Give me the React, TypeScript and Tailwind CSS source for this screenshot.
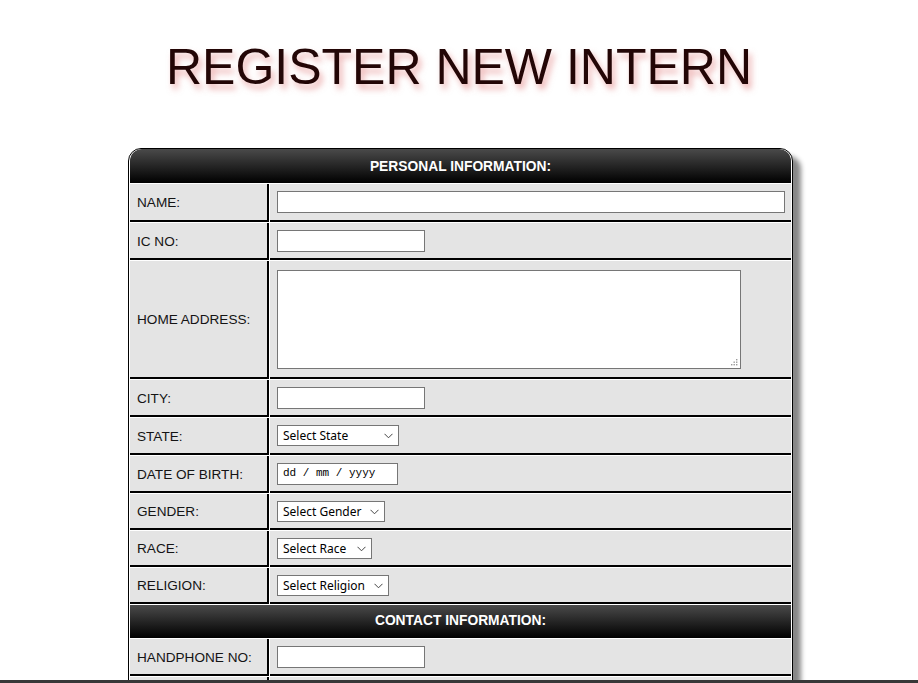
import React from "react";

const cellBase = "bg-[#e4e4e4] border-b-2 border-black flex items-center";

function Row({
  label,
  h,
  children,
}: {
  label: string;
  h: string;
  children: React.ReactNode;
}) {
  return (
    <div className={`flex gap-[1px] ${h}`}>
      <div
        className={`${cellBase} w-[139px] shrink-0 border-r-2 pl-[7px] pt-[3px] text-[13.6px] text-[#141414]`}
      >
        {label}
      </div>
      <div className={`${cellBase} flex-1 pl-[7px]`}>{children}</div>
    </div>
  );
}

function Header({ title, h }: { title: string; h: string }) {
  return (
    <div
      className={`${h} flex items-center justify-center bg-[linear-gradient(#4a4a4a,#000)] text-white font-bold text-[13.8px]`}
    >
      {title}
    </div>
  );
}

function Chevron() {
  return (
    <svg
      width="9"
      height="6"
      viewBox="0 0 9 6"
      className="absolute right-[6px] top-[8px] pointer-events-none"
    >
      <path d="M0.5 0.8 L4.5 4.8 L8.5 0.8" fill="none" stroke="#444" strokeWidth="1" />
    </svg>
  );
}

function Select({ text, w }: { text: string; w: string }) {
  return (
    <div className={`relative ${w} h-[21px]`}>
      <select className="block appearance-none w-full h-full bg-white border border-[#767676] text-[12px] text-black pl-[5px] leading-[19px] [font-family:'Noto_Sans',sans-serif]">
        <option>{text}</option>
      </select>
      <Chevron />
    </div>
  );
}

const inputCls = "block bg-white border border-[#767676] h-[22px] outline-none";

export default function App() {
  return (
    <div className="min-h-screen bg-white [font-family:'Liberation_Sans',Arial,sans-serif]">
      <h1 className="pt-[42px] text-center text-[50px] leading-[50px] text-[#230606] [text-shadow:3px_5px_6px_rgba(220,110,110,0.55)]">
        REGISTER NEW INTERN
      </h1>

      <div className="ml-[128px] mt-[56px] w-[665px] border border-black rounded-t-[13px] overflow-hidden bg-white shadow-[8px_8px_5px_#888] px-[1px] pb-[1px] flex flex-col gap-[1px]">
        <div className="rounded-t-[12px] overflow-hidden">
          <Header title="PERSONAL INFORMATION:" h="h-[34px] pt-[2px]" />
        </div>
        <Row label="NAME:" h="h-[38px]">
          <input className={`${inputCls} w-[508px]`} />
        </Row>
        <Row label="IC NO:" h="h-[37px]">
          <input className={`${inputCls} w-[148px]`} />
        </Row>
        <Row label="HOME ADDRESS:" h="h-[118px]">
          <div className="self-start pt-[9px]">
            <div className="relative w-[464px] h-[99px]">
              <textarea className="block resize-none bg-white border border-[#767676] w-full h-full" />
              <svg
                width="7"
                height="7"
                viewBox="0 0 7 7"
                className="absolute right-[3px] bottom-[3px] pointer-events-none"
              >
                <rect x="5" y="0" width="1.4" height="1.4" fill="#9a9a9a" />
                <rect x="2.5" y="2.5" width="1.4" height="1.4" fill="#9a9a9a" />
                <rect x="5" y="2.5" width="1.4" height="1.4" fill="#9a9a9a" />
                <rect x="0" y="5" width="1.4" height="1.4" fill="#9a9a9a" />
                <rect x="2.5" y="5" width="1.4" height="1.4" fill="#9a9a9a" />
                <rect x="5" y="5" width="1.4" height="1.4" fill="#9a9a9a" />
              </svg>
            </div>
          </div>
        </Row>
        <Row label="CITY:" h="h-[37px]">
          <input className={`${inputCls} w-[148px]`} />
        </Row>
        <Row label="STATE:" h="h-[37px]">
          <Select text="Select State" w="w-[122px]" />
        </Row>
        <Row label="DATE OF BIRTH:" h="h-[37px]">
          <div className="bg-white border border-[#767676] h-[22px] w-[121px] flex items-center pl-[5px] text-[11px] text-black [font-family:'Liberation_Mono',monospace]">
            dd / mm / yyyy
          </div>
        </Row>
        <Row label="GENDER:" h="h-[36px]">
          <Select text="Select Gender" w="w-[108px]" />
        </Row>
        <Row label="RACE:" h="h-[36px]">
          <Select text="Select Race" w="w-[95px]" />
        </Row>
        <Row label="RELIGION:" h="h-[36px]">
          <Select text="Select Religion" w="w-[112px]" />
        </Row>
        <Header title="CONTACT INFORMATION:" h="h-[33px]" />
        <Row label="HANDPHONE NO:" h="h-[37px]">
          <input className={`${inputCls} w-[148px]`} />
        </Row>
        <Row label="EMAIL:" h="h-[37px]">
          <input className={`${inputCls} w-[300px]`} />
        </Row>
        <Row label="TELEPHONE NO:" h="h-[37px]">
          <input className={`${inputCls} w-[148px]`} />
        </Row>
      </div>
      <div className="h-[40px]" />

      <div className="fixed left-0 right-0 bottom-0 h-[3px] bg-[#383838]" />
    </div>
  );
}
